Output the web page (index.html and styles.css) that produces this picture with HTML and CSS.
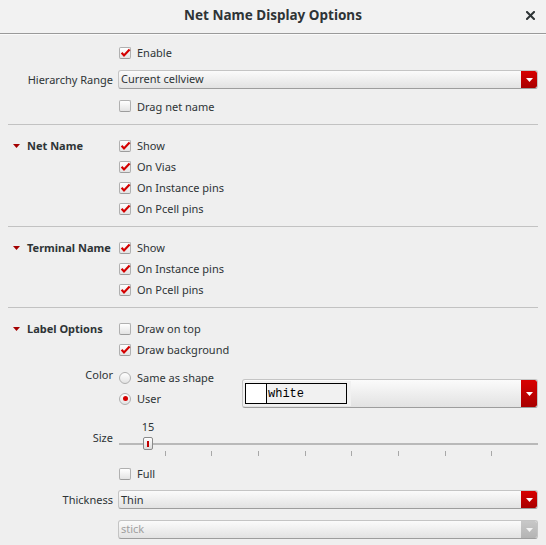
FILE: index.html
```html
<!DOCTYPE html>
<html>
<head>
<meta charset="utf-8">
<title>Net Name Display Options</title>
<link rel="stylesheet" href="styles.css">
</head>
<body>
<div class="dialog">
  <header class="titlebar">
    <span class="title">Net Name Display Options</span>
    <span class="close"><svg width="9" height="9" viewBox="0 0 9 9"><path d="M1 1L8 8M8 1L1 8" stroke="#2e3436" stroke-width="2" stroke-linecap="square"/></svg></span>
  </header>
  <main class="content">
    <div class="row r21"><div class="lbl"></div><div class="ctl"><span class="box on"><svg width="12" height="12" viewBox="0 0 12 12"><path d="M2.6 5.8L5 8.4L10.6 2.4" fill="none" stroke="#d40000" stroke-width="2.2"/></svg></span>Enable</div></div>
    <div class="row r32"><div class="lbl">Hierarchy Range</div><div class="ctl"><div class="combo"><span class="combo-text">Current cellview</span><span class="combo-btn"><svg width="7" height="5" viewBox="0 0 7 5"><path d="M0 1H7L3.5 5Z" fill="#fff"/></svg></span></div></div></div>
    <div class="row r21 r20"><div class="lbl"></div><div class="ctl"><span class="box"></span>Drag net name</div></div>

    <div class="sep sep-first"></div>

    <div class="row r21"><div class="lbl head"><svg class="tri" width="7" height="4" viewBox="0 0 7 4"><path d="M0 0H7L3.5 4Z" fill="#a40000"/></svg>Net Name</div><div class="ctl"><span class="box on"><svg width="12" height="12" viewBox="0 0 12 12"><path d="M2.6 5.8L5 8.4L10.6 2.4" fill="none" stroke="#d40000" stroke-width="2.2"/></svg></span>Show</div></div>
    <div class="row r21"><div class="lbl"></div><div class="ctl"><span class="box on"><svg width="12" height="12" viewBox="0 0 12 12"><path d="M2.6 5.8L5 8.4L10.6 2.4" fill="none" stroke="#d40000" stroke-width="2.2"/></svg></span>On Vias</div></div>
    <div class="row r21"><div class="lbl"></div><div class="ctl"><span class="box on"><svg width="12" height="12" viewBox="0 0 12 12"><path d="M2.6 5.8L5 8.4L10.6 2.4" fill="none" stroke="#d40000" stroke-width="2.2"/></svg></span>On Instance pins</div></div>
    <div class="row r21"><div class="lbl"></div><div class="ctl"><span class="box on"><svg width="12" height="12" viewBox="0 0 12 12"><path d="M2.6 5.8L5 8.4L10.6 2.4" fill="none" stroke="#d40000" stroke-width="2.2"/></svg></span>On Pcell pins</div></div>

    <div class="sep"></div>

    <div class="row r21"><div class="lbl head"><svg class="tri" width="7" height="4" viewBox="0 0 7 4"><path d="M0 0H7L3.5 4Z" fill="#a40000"/></svg>Terminal Name</div><div class="ctl"><span class="box on"><svg width="12" height="12" viewBox="0 0 12 12"><path d="M2.6 5.8L5 8.4L10.6 2.4" fill="none" stroke="#d40000" stroke-width="2.2"/></svg></span>Show</div></div>
    <div class="row r21"><div class="lbl"></div><div class="ctl"><span class="box on"><svg width="12" height="12" viewBox="0 0 12 12"><path d="M2.6 5.8L5 8.4L10.6 2.4" fill="none" stroke="#d40000" stroke-width="2.2"/></svg></span>On Instance pins</div></div>
    <div class="row r21"><div class="lbl"></div><div class="ctl"><span class="box on"><svg width="12" height="12" viewBox="0 0 12 12"><path d="M2.6 5.8L5 8.4L10.6 2.4" fill="none" stroke="#d40000" stroke-width="2.2"/></svg></span>On Pcell pins</div></div>

    <div class="sep"></div>

    <div class="row r21"><div class="lbl head"><svg class="tri" width="7" height="4" viewBox="0 0 7 4"><path d="M0 0H7L3.5 4Z" fill="#a40000"/></svg>Label Options</div><div class="ctl"><span class="box"></span>Draw on top</div></div>
    <div class="row r21"><div class="lbl"></div><div class="ctl"><span class="box on"><svg width="12" height="12" viewBox="0 0 12 12"><path d="M2.6 5.8L5 8.4L10.6 2.4" fill="none" stroke="#d40000" stroke-width="2.2"/></svg></span>Draw background</div></div>

    <div class="row color-row">
      <div class="lbl top">Color</div>
      <div class="color-ctl">
        <div class="radios">
          <div class="ctl r21"><span class="radio"></span>Same as shape</div>
          <div class="ctl r21"><span class="radio on"></span>User</div>
        </div>
        <div class="combo combo-color">
          <div class="swatch-wrap"><span class="swatch"></span><span class="color-name">white</span></div>
          <span class="combo-btn"><svg width="7" height="5" viewBox="0 0 7 5"><path d="M0 1H7L3.5 5Z" fill="#fff"/></svg></span>
        </div>
      </div>
    </div>

    <div class="row size-row">
      <div class="lbl size-lbl">Size</div>
      <div class="slider">
        <span class="slider-value" style="left:29px">15</span>
        <div class="track"></div>
        <div class="ticks"><span></span><span></span><span></span><span></span><span></span><span></span><span></span><span></span><span></span></div>
        <span class="handle" style="left:24px"><i></i></span>
      </div>
    </div>

    <div class="row r21"><div class="lbl"></div><div class="ctl"><span class="box"></span>Full</div></div>
    <div class="row r29"><div class="lbl">Thickness</div><div class="ctl"><div class="combo"><span class="combo-text">Thin</span><span class="combo-btn"><svg width="7" height="5" viewBox="0 0 7 5"><path d="M0 1H7L3.5 5Z" fill="#fff"/></svg></span></div></div></div>
    <div class="row r30"><div class="lbl"></div><div class="ctl"><div class="combo disabled"><span class="combo-text">stick</span><span class="combo-btn"><svg width="7" height="5" viewBox="0 0 7 5"><path d="M0 1H7L3.5 5Z" fill="#f4f4f4"/></svg></span></div></div></div>
  </main>
</div>
</body>
</html>
```

FILE: styles.css
```css
html, body {
  margin: 0;
  padding: 0;
  background: #efefef;
}
body {
  font-family: "Noto Sans", "Open Sans", sans-serif;
  font-size: 11px;
  color: #2e3436;
  width: 546px;
  height: 545px;
  overflow: hidden;
}
.titlebar {
  box-sizing: border-box;
  height: 34px;
  padding-bottom: 3px;
  background: #f2f2f2;
  border-bottom: 1px solid #9a9a9a;
  box-shadow: 0 1px 0 #fafafa;
  display: flex;
  align-items: center;
  justify-content: center;
  position: relative;
}
.title {
  font-weight: bold;
  font-size: 13.5px;
  color: #2e3436;
}
.close {
  position: absolute;
  right: 11px;
  top: 11px;
  width: 9px;
  height: 9px;
  display: flex;
}
.content {
  padding: 9px 8px 0 0;
}
.row {
  display: grid;
  grid-template-columns: 113px 1fr;
  column-gap: 5px;
}
.r21 { height: 21px; align-items: center; }
.r20 { height: 20px; }
.r21 > .lbl, .r21 > .ctl { margin-bottom: 2px; }
.r20 > .lbl, .r20 > .ctl { margin-bottom: 0; }
.radios .r21 { padding-bottom: 2px; box-sizing: border-box; }
.r29 { height: 29px; align-items: center; }
.r30 { height: 30px; align-items: center; }
.r32 { height: 32px; align-items: center; }
.r32 > .lbl, .r32 > .ctl { margin-bottom: 2px; }
.lbl {
  text-align: right;
  white-space: nowrap;
}
.lbl.head {
  text-align: left;
  font-weight: bold;
  padding-left: 13px;
  display: flex;
  align-items: center;
  gap: 7px;
}
.tri { flex: none; }
.ctl {
  display: flex;
  align-items: center;
  gap: 6px;
  white-space: nowrap;
}
.box {
  flex: none;
  box-sizing: border-box;
  width: 12px;
  height: 12px;
  margin-left: 1px;
  border: 1px solid #b0b0b0;
  border-bottom-color: #9c9c9c;
  border-radius: 2px;
  background: linear-gradient(#ffffff, #e3e3e3);
  position: relative;
}
.box svg {
  position: absolute;
  left: -1px;
  top: -1px;
}
.radio {
  flex: none;
  box-sizing: border-box;
  width: 12px;
  height: 12px;
  margin-left: 1px;
  border: 1px solid #b0b0b0;
  border-radius: 50%;
  background: linear-gradient(#ffffff, #e3e3e3);
  display: flex;
  align-items: center;
  justify-content: center;
}
.radio.on::after {
  content: "";
  width: 5px;
  height: 5px;
  border-radius: 50%;
  background: #d40000;
}
.sep {
  height: 1px;
  background: #c2c2c2;
  margin: 6px 0 11px 8px;
}
.sep-first { margin-top: 8px; }
.combo {
  flex: 1;
  box-sizing: border-box;
  height: 19px;
  border: 1px solid #c4c4c4;
  border-bottom-color: #9d9d9d;
  border-radius: 3px;
  background: linear-gradient(#fbfbfb, #e2e2e2);
  display: flex;
  align-items: center;
  overflow: hidden;
}
.combo-text {
  flex: 1;
  padding-left: 2px;
  padding-bottom: 1px;
}
.combo-btn {
  flex: none;
  width: 16px;
  align-self: stretch;
  background: linear-gradient(#d80000, #a80000);
  display: flex;
  align-items: center;
  justify-content: center;
  border-radius: 0 2px 2px 0;
}
.combo.disabled .combo-text { color: #a0a0a0; }
.combo.disabled .combo-btn { background: linear-gradient(#c8c8c8, #b4b4b4); }
.color-row {
  margin-top: 7px;
  height: 42px;
}
.lbl.top {
  line-height: 14px;
}
.color-ctl {
  display: flex;
}
.radios {
  width: 124px;
  flex: none;
}
.combo-color {
  margin-top: 11px;
  height: 29px;
}
.swatch-wrap {
  flex: none;
  display: flex;
  align-self: stretch;
  align-items: center;
  margin: 1px 0 1px 0;
  padding: 0 4px 0 2px;
  background: #f1f1f1;
}
.swatch {
  box-sizing: border-box;
  width: 21px;
  height: 21px;
  background: #ffffff;
  border: 1px solid #000;
  border-right: none;
}
.color-name {
  box-sizing: border-box;
  width: 81px;
  height: 21px;
  border: 1px solid #000;
  background: #f1f1f1;
  font-family: "Liberation Mono", "DejaVu Sans Mono", monospace;
  font-size: 12px;
  line-height: 21px;
  padding-left: 1px;
  color: #000;
}
.combo-color .swatch-wrap + .combo-btn { margin-left: auto; }
.size-row { height: 54px; }
.size-lbl { padding-top: 21px; line-height: 14px; }
.slider {
  position: relative;
  padding-top: 33px;
  margin-left: 1px;
}
.slider-value {
  position: absolute;
  top: 10px;
  line-height: 14px;
  transform: translateX(-50%);
}
.track {
  height: 2px;
  background: #b9b9b9;
}
.ticks {
  display: flex;
  margin-top: 6px;
  height: 5px;
}
.ticks span { flex: 1; }
.ticks span + span { border-left: 1px solid #a8a8a8; }
.handle {
  position: absolute;
  top: 27px;
  box-sizing: border-box;
  width: 10px;
  height: 13px;
  border: 1px solid #8a8a8a;
  border-radius: 2px;
  background: linear-gradient(#ffffff, #dcdcdc);
  display: flex;
  align-items: center;
  justify-content: center;
}
.handle i {
  width: 2px;
  height: 6px;
  background: #c00000;
}
```
